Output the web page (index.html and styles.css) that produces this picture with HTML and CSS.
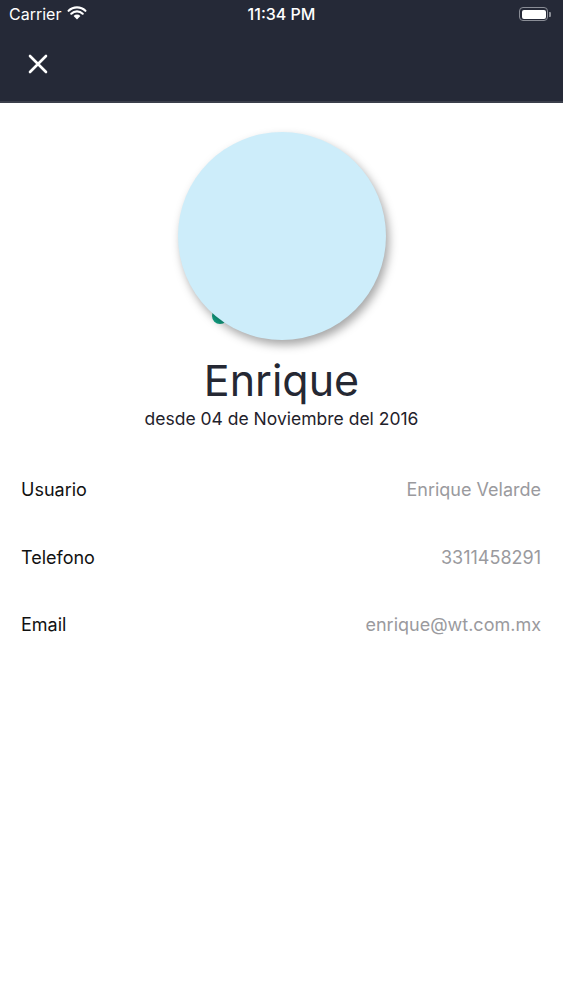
FILE: index.html
```html
<!DOCTYPE html>
<html lang="es">
<head>
  <meta charset="UTF-8">
  <meta name="viewport" content="width=device-width, initial-scale=1.0">
  <title>Perfil</title>
  <link rel="stylesheet" href="styles.css">
</head>
<body>

  <!-- Barra superior -->
  <div class="topbar">
    <div class="status">
      <div class="status-left">
        <span>Carrier</span>
        <svg class="wifi" width="20" height="14" viewBox="0 0 20 14">
          <path d="M10 13.5 L6.6 10 A4.8 4.8 0 0 1 13.4 10 Z" fill="#fff"/>
          <path d="M4.3 7.7 A8 8 0 0 1 15.7 7.7" fill="none" stroke="#fff" stroke-width="2.2" stroke-linecap="round"/>
          <path d="M1.6 4.8 A12 12 0 0 1 18.4 4.8" fill="none" stroke="#fff" stroke-width="2.2" stroke-linecap="round"/>
        </svg>
      </div>
      <div class="status-time">11:34 PM</div>
      <div class="status-right">
        <div class="battery"><div class="battery-fill"></div></div>
        <div class="battery-cap"></div>
      </div>
    </div>
    <div class="navbar">
      <svg class="close" width="20" height="20" viewBox="0 0 20 20">
        <path d="M2 2 L18 18 M18 2 L2 18" stroke="#fff" stroke-width="2.6" stroke-linecap="round"/>
      </svg>
    </div>
  </div>

  <!-- Perfil -->
  <div class="profile">
    <div class="avatar-wrap">
      <div class="badge"></div>
      <div class="avatar"></div>
    </div>
    <h1 class="name">Enrique</h1>
    <p class="since">desde 04 de Noviembre del 2016</p>
  </div>

  <div class="details">
    <div class="row">
      <span class="label">Usuario</span>
      <span class="value">Enrique Velarde</span>
    </div>
    <div class="row">
      <span class="label">Telefono</span>
      <span class="value">3311458291</span>
    </div>
    <div class="row">
      <span class="label">Email</span>
      <span class="value">enrique@wt.com.mx</span>
    </div>
  </div>

</body>
</html>
```

FILE: styles.css
```css
* {
  box-sizing: border-box;
  margin: 0;
  padding: 0;
}

body {
  font-family: 'Inter', 'Roboto', sans-serif;
  background: #fff;
  color: #1f222b;
}

.topbar {
  background-color: #252937;
  border-bottom: 2px solid #3b3f4b;
  height: 103px;
}

.status {
  height: 28px;
  display: flex;
  align-items: center;
  justify-content: space-between;
  padding: 0 12px 0 9px;
  color: #fff;
  font-size: 16px;
  position: relative;
}

.status-left {
  display: flex;
  align-items: center;
  gap: 6px;
}

.wifi {
  margin-top: -2px;
}

.status-time {
  position: absolute;
  left: 0;
  right: 0;
  text-align: center;
  font-weight: 500;
  pointer-events: none;
}

.status-right {
  display: flex;
  align-items: center;
  gap: 1px;
}

.battery {
  width: 29px;
  height: 14px;
  border: 1.5px solid #8a8d96;
  border-radius: 4px;
  padding: 1.5px;
}

.battery-fill {
  width: 100%;
  height: 100%;
  background: #fff;
  border-radius: 2px;
}

.battery-cap {
  width: 2px;
  height: 5px;
  background: #8a8d96;
  border-radius: 0 1px 1px 0;
}

.navbar {
  height: 73px;
  display: flex;
  align-items: center;
  padding-left: 28px;
  padding-bottom: 2px;
}

.profile {
  display: flex;
  flex-direction: column;
  align-items: center;
  padding-top: 29px;
}

.avatar-wrap {
  position: relative;
  width: 208px;
  height: 208px;
}

.avatar {
  position: relative;
  width: 208px;
  height: 208px;
  border-radius: 50%;
  background-color: #cdedfa;
  box-shadow: 3px 5px 10px rgba(0, 0, 0, 0.35);
}

/* punto verde detrás del avatar */
.badge {
  position: absolute;
  left: 34px;
  top: 176px;
  width: 16px;
  height: 16px;
  border-radius: 50%;
  background-color: #12a486;
}

.name {
  font-size: 43px;
  font-weight: 400;
  color: #252833;
  margin-top: 14px;
  line-height: 52px;
}

.since {
  font-size: 17.5px;
  line-height: 21px;
  color: #1f222b;
  margin-top: 2px;
}

.details {
  margin-top: 27px;
  padding: 0 22px 0 21px;
}

.row {
  display: flex;
  justify-content: space-between;
  align-items: center;
  height: 67.5px;
  font-size: 18px;
}

.label {
  color: #111;
}

.value {
  color: #9a9a9e;
}
```
